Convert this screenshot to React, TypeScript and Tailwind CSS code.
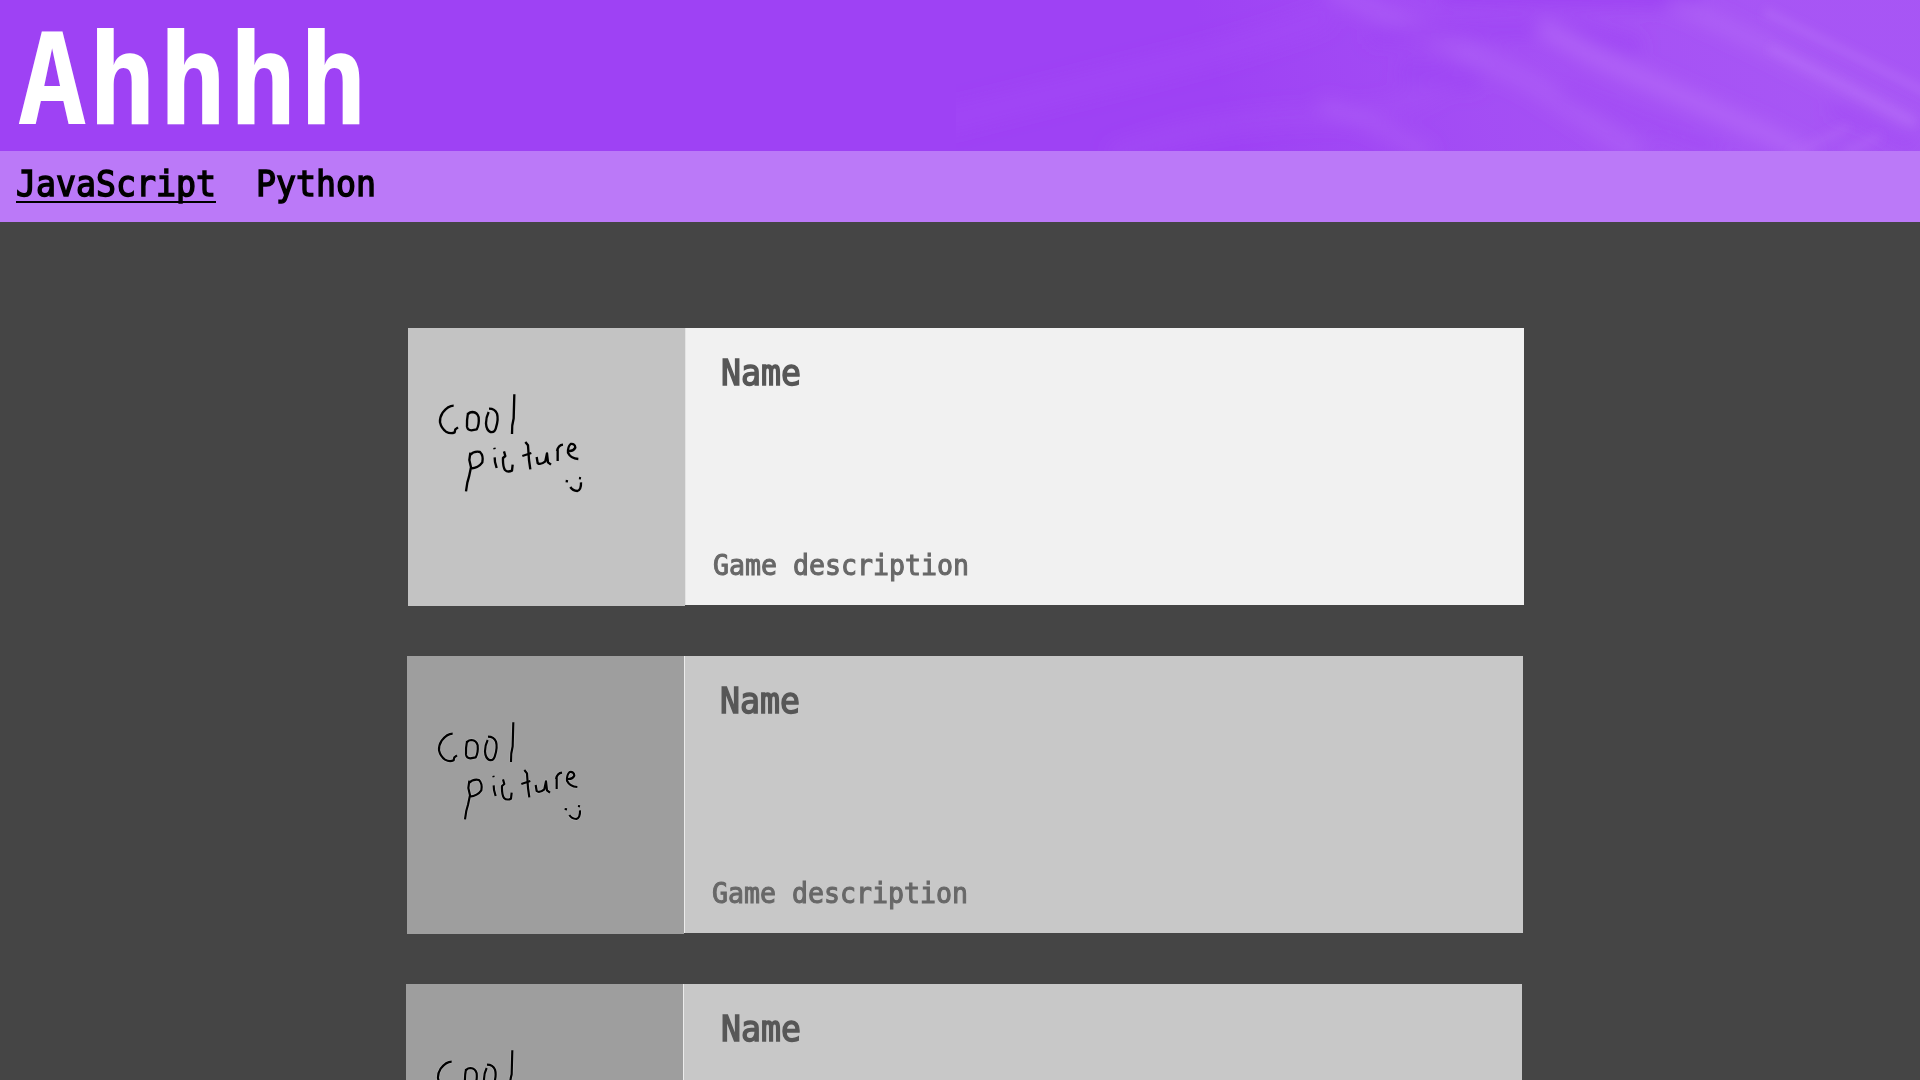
const strokes: string[] = [
  'M161 77 Q144 77 128 98 Q119 112 120 127 Q124 145 138 155 Q152 163 164 157 L166 148 L174 142',
  'M204 99 Q200 120 201 140 Q203 151 214 151 L230 148 Q238 135 236 112 Q232 97 218 96 Q208 96 203 104',
  'M266 96 Q258 112 258 130 Q259 150 271 156 Q284 159 288 143 Q296 118 291 101 Q285 86 267 86',
  'M343 43 L341 115 Q335 135 336 162',
  'M211 218 L208 240 L213 262 L207 290 L202 308 L198 334 M209 226 Q222 212 240 216 Q251 227 247 247 Q236 263 212 266',
  'M283 203 L284 208 M284 232 L285 246 L290 264',
  'M312 214 L316 228 L309 234 Q308 260 315 270 Q323 278 336 272 L338 254',
  'M376 186 L384 196 L387 240 L391 268 M367 228 L394 219',
  'M410 231 L413 249 Q421 256 436 244 L441 220 L444 247 L453 254',
  'M473 243 L473 205 M471 213 Q475 195 489 194',
  'M502 212 Q519 216 526 203 Q525 190 512 192 Q503 200 504 218 Q512 235 535 237',
  'M497 303 L504 304 M537 294 L543 295 M511 321 Q518 332 532 333 Q544 329 543 307',
];

function Thumbnail({ active }: { active: boolean }) {
  return (
    <div className={`h-[278px] w-[277px] shrink-0 ${active ? 'bg-[#c3c3c3]' : 'bg-[#9e9e9e]'}`}>
      <svg viewBox="0 0 277 278" width="277" height="278" fill="none">
        <g transform="translate(-8 52) scale(0.33333)" strokeLinejoin="round">
          {!active && strokes.map((d) => <path key={d} d={d} stroke="#c3c3c3" strokeOpacity="0.4" strokeWidth="11" />)}
          {strokes.map((d) => (
            <path key={d} d={d} stroke="#000" strokeWidth={active ? 7 : 6.5} />
          ))}
        </g>
      </svg>
    </div>
  );
}

type GameCardProps = { active?: boolean; description?: string; shift: string; nameShift: string };

function GameCard({ active = false, description, shift, nameShift }: GameCardProps) {
  return (
    <article className={`flex h-[278px] w-[1116px] shrink-0 ${shift}`}>
      <Thumbnail active={active} />
      <div
        className={`flex h-[277px] flex-1 flex-col justify-between border-l ${
          active ? 'border-[#e4e4e4] bg-[#f1f1f1]' : 'border-[#ececec] bg-[#c8c8c8]'
        }`}
      >
        <h2
          className={`mt-[28px] origin-bottom scale-y-[1.07] text-[33.22px] leading-[36px] text-[#575757] [-webkit-text-stroke:1.4px_#575757] ${nameShift}`}
        >
          Name
        </h2>
        {description && (
          <p className="mb-[23px] ml-[27px] origin-bottom scale-y-[1.07] text-[26.58px] leading-[32px] text-[#686868] [-webkit-text-stroke:1px_#686868]">
            {description}
          </p>
        )}
      </div>
    </article>
  );
}

function HeaderStreaks() {
  return (
    <svg className="h-[151px] w-[964px]" viewBox="956 0 964 151" fill="none">
      <defs>
        <linearGradient id="wash" x1="1240" y1="160" x2="1760" y2="0" gradientUnits="userSpaceOnUse">
          <stop offset="0" stopColor="#a959f5" stopOpacity="0" />
          <stop offset="0.45" stopColor="#a959f5" stopOpacity="0.5" />
          <stop offset="1" stopColor="#a959f5" stopOpacity="0.85" />
        </linearGradient>
        <filter id="soft" x="-20%" y="-50%" width="140%" height="200%">
          <feGaussianBlur stdDeviation="9" />
        </filter>
        <filter id="fine" x="-20%" y="-50%" width="140%" height="200%">
          <feGaussianBlur stdDeviation="4" />
        </filter>
      </defs>
      <path d="M956 0H1920V151H956Z" fill="url(#wash)" />
      <g filter="url(#soft)">
        <path d="M940 122 Q1060 92 1160 67 T1330 15" stroke="#a64cf7" strokeOpacity="0.4" strokeWidth="24" />
        <path d="M1110 155 Q1210 118 1320 116 T1480 50" stroke="#aa55f5" strokeOpacity="0.35" strokeWidth="18" />
        <path d="M1330 -10 L1450 43 L1530 82 L1640 155" stroke="#b56bf7" strokeOpacity="0.4" strokeWidth="20" />
        <path d="M1320 104 L1370 122 L1430 155" stroke="#b56bf7" strokeOpacity="0.35" strokeWidth="16" />
        <path d="M1440 -12 L1700 -6" stroke="#9b3df3" strokeOpacity="0.8" strokeWidth="30" />
        <path d="M1370 35 L1480 30 L1560 28 L1640 48" stroke="#9c3ff3" strokeOpacity="0.6" strokeWidth="18" />
        <path d="M1400 70 L1480 80" stroke="#9c3ff3" strokeOpacity="0.5" strokeWidth="24" />
        <path d="M1540 26 L1600 59 L1680 95 L1770 135 L1810 156" stroke="#b56bf7" strokeOpacity="0.75" strokeWidth="16" />
        <path d="M1560 90 L1650 125 L1720 150" stroke="#9e43f3" strokeOpacity="0.35" strokeWidth="18" />
        <path d="M1830 108 L1860 115 L1915 145" stroke="#9e43f3" strokeOpacity="0.45" strokeWidth="16" />
        <path d="M1670 0 L1770 48 L1835 82 L1915 125" stroke="#b872f8" strokeOpacity="0.5" strokeWidth="14" />
      </g>
      <g filter="url(#fine)">
        <path d="M1770 48 L1835 81 L1915 123" stroke="#b970f9" strokeOpacity="0.5" strokeWidth="7" />
        <path d="M1765 12 L1850 54 L1930 94" stroke="#b66cf7" strokeOpacity="0.5" strokeWidth="10" />
        <path d="M1790 156 L1848 127 M1845 153 L1880 136" stroke="#b369f6" strokeOpacity="0.45" strokeWidth="8" />
      </g>
    </svg>
  );
}

export default function App() {
  return (
    <div className="h-[1080px] w-full overflow-hidden bg-[#454545] font-['DejaVu_Sans_Mono',monospace]">
      <header className="flex h-[151px] items-start justify-between bg-[#9e42f4]">
        <h1 className="ml-[17px] mt-[26px] origin-bottom scale-y-[1.09] text-[116.8px] leading-[120px] font-bold text-white">
          Ahhhh
        </h1>
        <HeaderStreaks />
      </header>
      <nav className="flex h-[71px] gap-[40px] bg-[#bb79f8] pl-[16px] pt-[11px] text-[33.22px] leading-[47px] text-black">
        <a className="h-[41px] border-b-2 border-black">
          <span className="block origin-bottom scale-y-[1.07] [-webkit-text-stroke:1.4px_#000]">JavaScript</span>
        </a>
        <a className="h-[41px]">
          <span className="block origin-bottom scale-y-[1.07] [-webkit-text-stroke:1.4px_#000]">Python</span>
        </a>
      </nav>
      <main className="flex flex-col gap-[50px] pt-[106px]">
        <GameCard active description="Game description" shift="ml-[408px]" nameShift="ml-[35px]" />
        <GameCard description="Game description" shift="ml-[407px]" nameShift="ml-[35px]" />
        <GameCard shift="ml-[406px]" nameShift="ml-[37px]" />
      </main>
    </div>
  );
}
